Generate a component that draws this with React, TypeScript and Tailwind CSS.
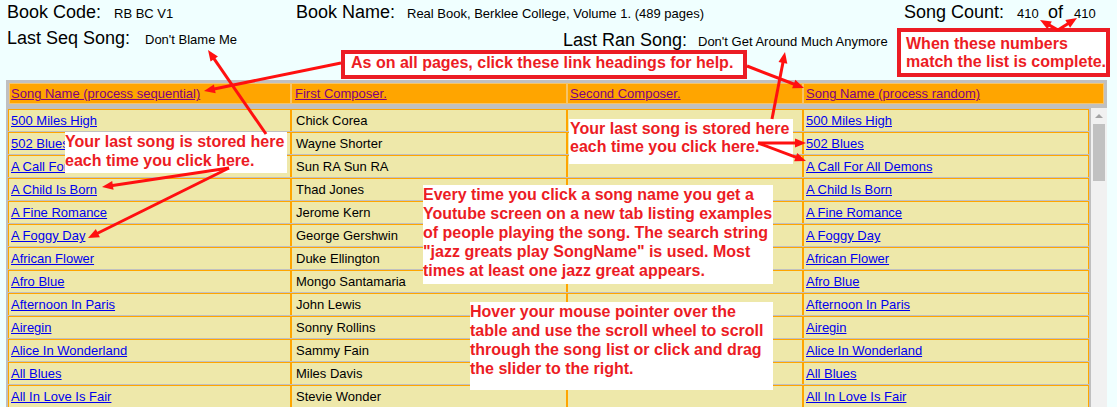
import React from "react";

const songs = [
  "500 Miles High",
  "502 Blues",
  "A Call For All Demons",
  "A Child Is Born",
  "A Fine Romance",
  "A Foggy Day",
  "African Flower",
  "Afro Blue",
  "Afternoon In Paris",
  "Airegin",
  "Alice In Wonderland",
  "All Blues",
  "All In Love Is Fair",
];

const composers = [
  "Chick Corea",
  "Wayne Shorter",
  "Sun RA Sun RA",
  "Thad Jones",
  "Jerome Kern",
  "George Gershwin",
  "Duke Ellington",
  "Mongo Santamaria",
  "John Lewis",
  "Sonny Rollins",
  "Sammy Fain",
  "Miles Davis",
  "Stevie Wonder",
];

type Pt = [number, number];

function Arrow({ from, to }: { from: Pt; to: Pt }) {
  const [x1, y1] = from;
  const [x2, y2] = to;
  const dx = x2 - x1;
  const dy = y2 - y1;
  const len = Math.sqrt(dx * dx + dy * dy);
  const ux = dx / len;
  const uy = dy / len;
  const L = 11;
  const W = 4.5;
  const bx = x2 - ux * L;
  const by = y2 - uy * L;
  const px = -uy;
  const py = ux;
  const pts = `${x2},${y2} ${bx + px * W},${by + py * W} ${bx - px * W},${by - py * W}`;
  return (
    <g>
      <line x1={x1} y1={y1} x2={bx + ux * 2} y2={by + uy * 2} stroke="#ff1010" strokeWidth={3} />
      <polygon points={pts} fill="#ff1010" />
    </g>
  );
}

export default function App() {
  const red = "text-[#ec1c24]";
  return (
    <div className="relative w-[1117px] h-[407px] overflow-hidden bg-[#f0ffff] font-['Liberation_Sans',Arial,sans-serif] text-black">
      {/* top info */}
      <div className="h-[80px] pt-[1px]">
        <div className="flex h-[26px] items-baseline leading-[22px]">
          <div className="flex w-[296px] items-baseline pl-[7px]">
            <span className="inline-block w-[107px] text-[18px]">Book Code:</span>
            <span className="text-[13px]">RB BC V1</span>
          </div>
          <div className="flex w-[608px] items-baseline">
            <span className="inline-block w-[111px] text-[18px]">Book Name:</span>
            <span className="text-[13px]">Real Book, Berklee College, Volume 1. (489 pages)</span>
          </div>
          <div className="flex items-baseline">
            <span className="inline-block w-[113px] text-[18px]">Song Count:</span>
            <span className="inline-block w-[31px] text-[13px]">410</span>
            <span className="inline-block w-[26px] text-[18px]">of</span>
            <span className="text-[13px]">410</span>
          </div>
        </div>
        <div className="flex h-[26px] items-start leading-[22px]">
          <div className="flex w-[563px] items-baseline pl-[7px]">
            <span className="inline-block w-[138px] text-[18px]">Last Seq Song:</span>
            <span className="text-[13px]">Don't Blame Me</span>
          </div>
          <div className="mt-[2px] flex items-baseline">
            <span className="inline-block w-[135px] text-[18px]">Last Ran Song:</span>
            <span className="text-[13px]">Don't Get Around Much Anymore</span>
          </div>
        </div>
      </div>

      {/* table frame */}
      <div className="ml-[6px] h-[327px] w-[1101px] overflow-hidden bg-[#c0c0c0] text-[13px]">
        <div className="px-[3px] pb-[4px] pt-[3px]">
          <div className="flex h-[21px] leading-[19px]">
            {[
              ["Song Name (process sequential)", "w-[282px] pl-[1px]"],
              ["First Composer.", "w-[276px] pl-[3px]"],
              ["Second Composer.", "w-[236px] pl-[2px]"],
              ["Song Name (process random)", "w-[301px] pl-[2px]"],
            ].map(([t, c]) => (
              <div key={t} className={`${c} border border-[#f5c46a] bg-[#ffa500]`}>
                <a className="text-[#800080] underline">{t}</a>
              </div>
            ))}
          </div>
        </div>
        <div className="flex">
          <div className="flex w-[1083px] flex-col gap-y-px pl-[2px] pt-[1px]">
            {songs.map((s, i) => (
              <div key={s} className="flex h-[22px] leading-[21px]">
                <div className="w-[283px] border-x border-t border-[#ffa500] bg-[#eee8aa] pl-[2px]">
                  <a className="text-[#0000ee] underline">{s}</a>
                </div>
                <div className="w-[276px] border-x border-t border-[#ffa500] bg-[#eee8aa] pl-[4px]">
                  {composers[i]}
                </div>
                <div className="w-[236px] border-x border-t border-[#ffa500] bg-[#eee8aa]"></div>
                <div className="w-[286px] border-x border-t border-[#ffa500] bg-[#eee8aa] pl-[2px]">
                  <a className="text-[#0000ee] underline">{s}</a>
                </div>
              </div>
            ))}
          </div>
          <div className="ml-[2px] flex h-[299px] w-[16px] flex-col items-center bg-[#f1f1f1]">
            <svg width="16" height="16" className="shrink-0">
              <polygon points="4,10 12,10 8,6" fill="#a3a3a3" />
            </svg>
            <div className="h-[57px] w-[12px] bg-[#c1c1c1]"></div>
          </div>
        </div>
      </div>

      {/* annotations */}
      <div className={`absolute left-[341px] top-[50px] h-[29px] w-[406px] border-4 border-[#ec1c24] bg-white pl-[6px] pt-[1px] text-[16px] font-bold leading-[16px] whitespace-nowrap ${red}`}>
        As on all pages, click these link headings for help.
      </div>

      <div className={`absolute left-[897px] top-[28px] h-[49px] w-[213px] border-4 border-[#ec1c24] bg-white pl-[5px] pt-[3px] text-[16px] font-bold leading-[18px] whitespace-nowrap ${red}`}>
        When these numbers
        <br />
        match the list is complete.
      </div>

      <div className={`absolute left-[65px] top-[132px] h-[41px] w-[222px] bg-white text-[16px] font-bold leading-[19px] whitespace-nowrap ${red}`}>
        Your last song is stored here
        <br />
        each time you click here.
      </div>

      <div className={`absolute left-[569px] top-[119px] h-[45px] w-[224px] bg-white pl-[1px] pt-[1px] text-[16px] font-bold leading-[18px] whitespace-nowrap ${red}`}>
        Your last song is stored here
        <br />
        each time you click here.
      </div>

      <div className={`absolute left-[423px] top-[185px] h-[99px] w-[350px] bg-white text-[16px] font-bold leading-[19px] whitespace-nowrap ${red}`}>
        Every time you click a song name you get a
        <br />
        Youtube screen on a new tab listing examples
        <br />
        of people playing the song. The search string
        <br />
        "jazz greats play SongName" is used. Most
        <br />
        times at least one jazz great appears.
      </div>

      <div className={`absolute left-[470px] top-[302px] h-[88px] w-[303px] bg-white text-[16px] font-bold leading-[19px] whitespace-nowrap ${red}`}>
        Hover your mouse pointer over the
        <br />
        table and use the scroll wheel to scroll
        <br />
        through the song list or click and drag
        <br />
        the slider to the right.
      </div>

      <svg className="pointer-events-none absolute left-0 top-0" width="1117" height="407">
        <Arrow from={[341, 63]} to={[204, 91]} />
        <Arrow from={[747, 66]} to={[804, 88]} />
        <Arrow from={[266, 134]} to={[208, 50]} />
        <Arrow from={[229, 168]} to={[102, 187]} />
        <Arrow from={[229, 168]} to={[88, 238]} />
        <Arrow from={[772, 119]} to={[785, 52]} />
        <Arrow from={[758, 143]} to={[806, 143]} />
        <Arrow from={[758, 143]} to={[806, 161]} />
        <Arrow from={[1058, 30]} to={[1040, 20]} />
        <Arrow from={[1058, 30]} to={[1077, 18]} />
      </svg>
    </div>
  );
}
